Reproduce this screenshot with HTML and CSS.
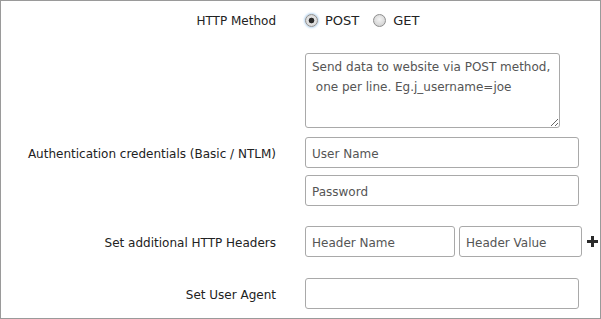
FILE: index.html
```html
<!DOCTYPE html>
<html>
<head>
<meta charset="utf-8">
<link rel="stylesheet" href="styles.css">
</head>
<body>
<div class="panel">
  <div class="row row-method">
    <div class="label">HTTP Method</div>
    <div class="control radios">
      <label class="radio"><input type="radio" name="m" checked><span>POST</span></label>
      <label class="radio"><input type="radio" name="m"><span>GET</span></label>
    </div>
  </div>
  <div class="row row-data">
    <div class="label"></div>
    <div class="control"><textarea class="ta" placeholder="Send data to website via POST method,&#10; one per line. Eg.j_username=joe"></textarea></div>
  </div>
  <div class="row row-user">
    <div class="label">Authentication credentials (Basic / NTLM)</div>
    <div class="control"><input class="inp wide" type="text" placeholder="User Name"></div>
  </div>
  <div class="row row-pass">
    <div class="label"></div>
    <div class="control"><input class="inp wide" type="text" placeholder="Password"></div>
  </div>
  <div class="row row-headers">
    <div class="label">Set additional HTTP Headers</div>
    <div class="control headers">
      <input class="inp hname" type="text" placeholder="Header Name">
      <input class="inp hval" type="text" placeholder="Header Value">
      <svg class="plus" width="11" height="11" viewBox="0 0 11 11"><path d="M4 0h3v4h4v3H7v4H4V7H0V4h4z" fill="#2a2a2a"/></svg>
    </div>
  </div>
  <div class="row row-ua">
    <div class="label">Set User Agent</div>
    <div class="control"><input class="inp wide" type="text"></div>
  </div>
</div>
</body>
</html>
```

FILE: styles.css
```css
* { box-sizing: border-box; }
html, body { margin: 0; padding: 0; background: #fff; }
body {
  font-family: "DejaVu Sans", Verdana, sans-serif;
  font-size: 12px;
  color: #222;
}
.panel {
  width: 601px;
  height: 319px;
  border: 1px solid #9a9a9a;
  overflow: hidden;
}
.row {
  display: grid;
  grid-template-columns: 275px 1fr;
  column-gap: 29px;
  align-items: center;
}
.label { text-align: right; white-space: nowrap; padding-top: 2px; }
.row-method { height: 22px; margin-top: 8px; }
.row-data { margin-top: 22px; }
.row-user { margin-top: 9px; }
.row-pass { margin-top: 7px; }
.row-headers { margin-top: 20px; }
.row-ua { margin-top: 21px; }

.radios { display: flex; align-items: center; gap: 14px; }
.radio { display: flex; align-items: center; gap: 7px; font-size: 13px; }
.radio span { padding-top: 1px; }
.radio input {
  appearance: none;
  -webkit-appearance: none;
  margin: 0;
  width: 13px;
  height: 13px;
  border-radius: 50%;
  border: 1px solid #8e8e8e;
  background: radial-gradient(circle at 50% 40%, #f4f4f4 0, #d6d6d6 70%, #c4c4c4 100%);
  position: relative;
}
.radio input:checked {
  box-shadow: 0 0 2px 1px #bcd9f3;
  background: radial-gradient(circle, #2b2b2b 0, #2b2b2b 2.5px, #e4e4e4 3.2px, #cfcfcf 100%);
}

.ta {
  display: block;
  width: 255px;
  height: 75px;
  margin: 0;
  border: 1px solid #a9a9a9;
  border-radius: 3px;
  padding: 3px 6px 1px;
  font-family: "DejaVu Sans", Verdana, sans-serif;
  font-size: 12px;
  line-height: 20px;
  color: #333;
  resize: vertical;
}
.ta::placeholder { color: #555; opacity: 1; }

.inp {
  display: block;
  height: 31px;
  margin: 0;
  border: 1px solid #a9a9a9;
  border-radius: 3px;
  padding: 2px 6px 0;
  font-family: "DejaVu Sans", Verdana, sans-serif;
  font-size: 12px;
  color: #333;
  outline: none;
}
.inp::placeholder { color: #555; opacity: 1; }
.wide { width: 274px; }
.headers { display: flex; align-items: center; }
.hname { width: 150px; }
.hval { width: 123px; margin-left: 4px; }
.plus { margin-left: 5px; }
```
